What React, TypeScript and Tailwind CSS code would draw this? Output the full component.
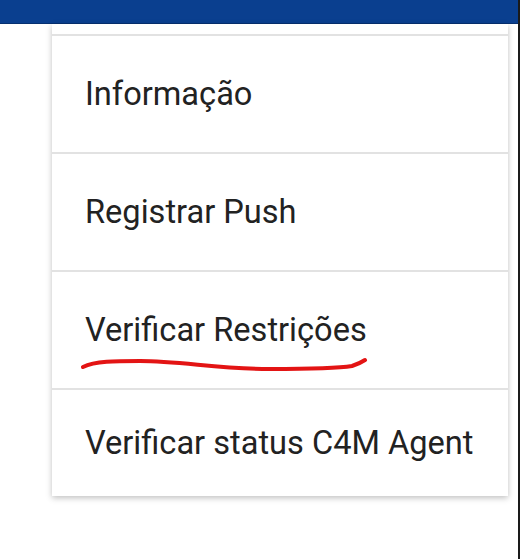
import React from 'react';

const items = ['Informação', 'Registrar Push', 'Verificar Restrições', 'Verificar status C4M Agent'];

const MenuItem: React.FC<{ label: string; last?: boolean }> = ({ label, last }) => (
  <div
    className={`flex items-center pl-[33px] text-[32.6px] text-[#222222] border-t-2 border-[#e2e2e2] ${
      last ? 'h-[108px]' : 'h-[118px]'
    }`}
  >
    <span className="leading-none">{label}</span>
  </div>
);

export default function App() {
  return (
    <div className="relative flex w-[520px] h-[559px] bg-white overflow-hidden" style={{ fontFamily: 'Roboto, "Noto Sans", sans-serif' }}>
      <div className="flex-1 flex flex-col">
        <div className="h-[24px] bg-[#0a3f8f] border-b border-[#063070]" />
        <div className="pl-[52px]">
          <div className="w-[456px] bg-white shadow-[0_2px_6px_rgba(0,0,0,0.25)]">
            <div className="h-[10px]" />
            {items.map((label, i) => (
              <MenuItem key={label} label={label} last={i === items.length - 1} />
            ))}
          </div>
        </div>
      </div>
      <div className="w-[2px] bg-[#1a1a1a]" />
      <svg className="absolute left-0 top-0 pointer-events-none" width="520" height="559">
        <path
          d="M83 367 C 95 361, 115 361, 140 361 C 180 361, 220 369, 270 369 C 310 369, 340 368, 352 366 C 358 364, 362 362, 365 360"
          stroke="#e31414"
          strokeWidth="4"
          fill="none"
          strokeLinecap="round"
        />
      </svg>
    </div>
  );
}
